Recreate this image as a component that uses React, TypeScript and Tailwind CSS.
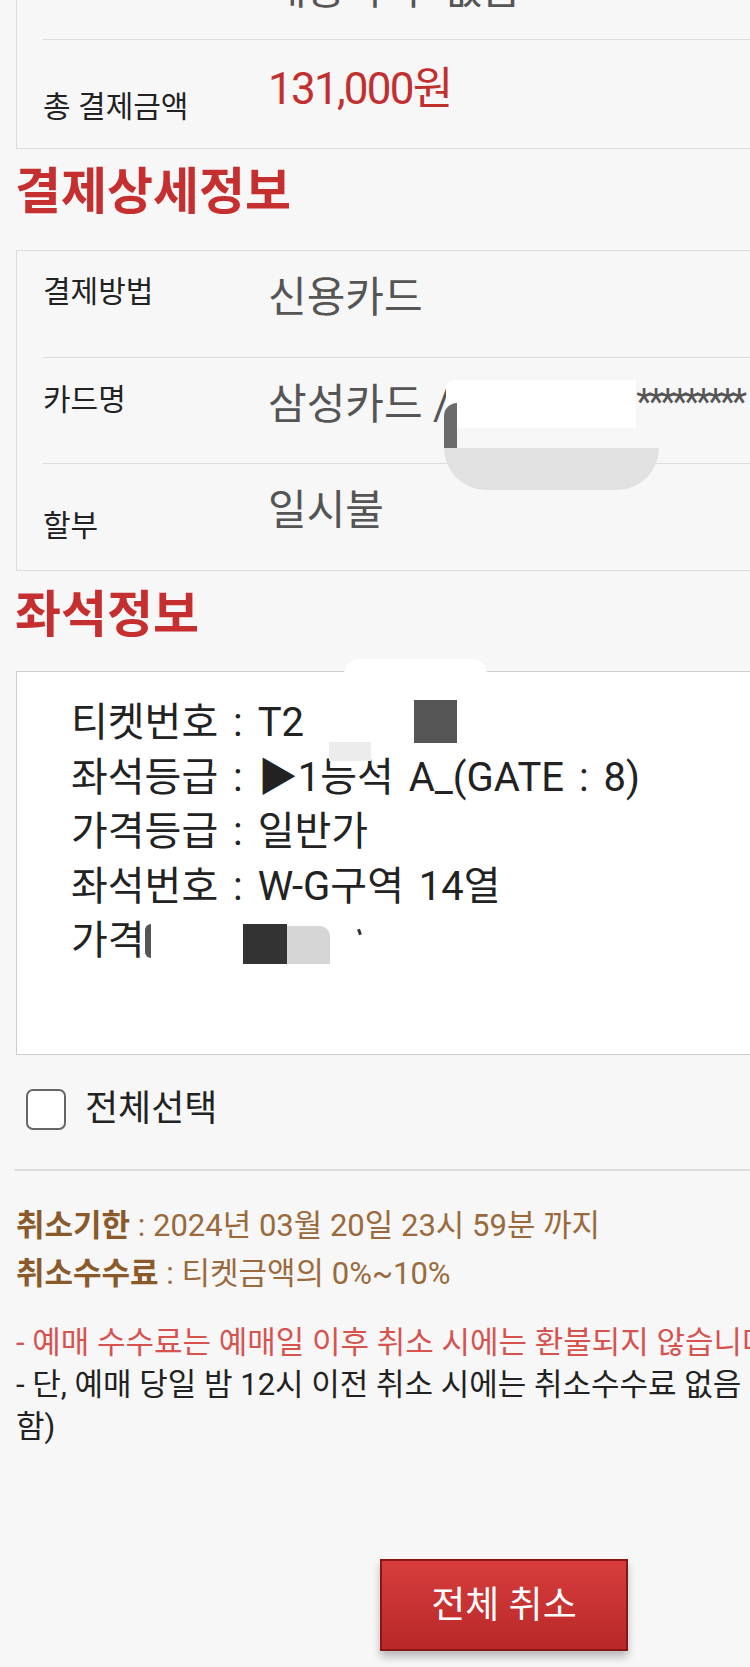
import React from "react";

const font = "font-['Roboto','Noto_Sans_CJK_KR',sans-serif]";

type Row = { label: string; value: React.ReactNode; labelPad: string };

function InfoRow({ label, value, labelPad, first, h }: Row & { first?: boolean; h: string }) {
  return (
    <div className={`ml-[26px] flex ${h} ${first ? "" : "border-t border-[#dcdcdc]"}`}>
      <div className={`w-[225px] shrink-0 text-[30px] leading-none text-[#222] ${labelPad}`}>{label}</div>
      <div className="relative pt-[26px] text-[42px] leading-none text-[#555] whitespace-nowrap">{value}</div>
    </div>
  );
}

export default function App() {
  return (
    <div className={`relative h-[1667px] w-[750px] overflow-hidden bg-[#f7f7f7] ${font}`}>
      {/* 상단 결제 요약 박스 (위쪽 잘림) */}
      <div className="ml-[16px] mt-[-70px] w-[900px] border border-[#dcdcdc]">
        <div className="ml-[26px] flex h-[108px]">
          <div className="w-[225px] shrink-0" />
          <div className="pt-[38px] text-[42px] leading-none text-[#555] whitespace-nowrap">배송 수수 없음</div>
        </div>
        <div className="ml-[26px] flex h-[109px] border-t border-[#dcdcdc]">
          <div className="w-[225px] shrink-0 pt-[52px] text-[30px] leading-none text-[#222]">총 결제금액</div>
          <div className="pt-[27px] text-[44px] leading-none tracking-[-0.04em] text-[#c1302f]">131,000원</div>
        </div>
      </div>

      <h2 className="h-[101px] pt-[18px] pl-[15px] text-[50px] font-bold leading-none text-[#c62f2f]">결제상세정보</h2>

      <div className="ml-[16px] w-[900px] border border-[#dcdcdc]">
        <InfoRow first h="h-[106px]" label="결제방법" labelPad="pt-[26px]" value="신용카드" />
        <InfoRow
          h="h-[106px]"
          label="카드명"
          labelPad="pt-[27px]"
          value={
            <>
              삼성카드 /<span className="ml-[186px] align-top text-[36px] tracking-[-0.1em]">*********</span>
              {/* 가림 처리 */}
              <div className="absolute left-[178px] top-[22px] h-[48px] w-[190px] rounded-tl-[8px] bg-white" />
              <div className="absolute left-[176px] top-[45px] h-[45px] w-[13px] rounded-tl-[14px] bg-[#6b6b6b]" />
              <div className="absolute left-[176px] top-[90px] h-[42px] w-[215px] rounded-b-[60px] bg-[#e1e1e1]" />
            </>
          }
        />
        <InfoRow h="h-[107px]" label="할부" labelPad="pt-[47px]" value="일시불" />
      </div>

      <h2 className="h-[100px] pt-[19px] pl-[15px] text-[50px] font-bold leading-none text-[#c62f2f]">좌석정보</h2>

      <div className="relative ml-[16px] h-[384px] w-[900px] border border-[#cfcfcf] bg-white">
        <div className="absolute left-[327px] top-[-13px] h-[15px] w-[143px] rounded-t-[40px] bg-white" />
        <div className="pl-[54px] pt-[24px] text-[40px] leading-[54.5px] text-[#222] [word-spacing:5px]">
          <div className="relative">
            티켓번호 : T2
            <div className="absolute left-[343px] top-[4px] h-[43px] w-[43px] bg-[#555]" />
            <div className="absolute left-[258px] top-[46px] h-[19px] w-[42px] bg-[#ececec]" />
          </div>
          <div>좌석등급 : ▶1능석 A_(GATE : 8)</div>
          <div>가격등급 : 일반가</div>
          <div>좌석번호 : W-G구역 14열</div>
          <div className="relative">
            가격
            <span className="inline-block h-[34px] w-[6px] translate-y-[4px] rounded-l-full bg-[#555]" />
            <div className="absolute left-[172px] top-[10px] h-[40px] w-[44px] bg-[#333]" />
            <div className="absolute left-[216px] top-[12px] h-[38px] w-[43px] rounded-tr-[10px] bg-[#d6d6d6]" />
            <div className="absolute left-[287px] top-[15px] h-[6px] w-[3px] rotate-[-20deg] bg-[#333]" />
          </div>
        </div>
      </div>

      <label className="flex h-[114px] items-center gap-[19px] pl-[26px] pb-[6px]">
        <span className="h-[41px] w-[40px] rounded-[7px] border-2 border-[#666] bg-white" />
        <span className="text-[36px] leading-none text-[#222]">전체선택</span>
      </label>

      <div className="ml-[14px] w-[900px] border-t-2 border-[#dddddd]" />

      <div className="pl-[16px] pt-[31px] text-[31px] leading-[48px] text-[#9a6a3c] whitespace-nowrap">
        <div>
          <span className="font-bold text-[#8b5a2b]">취소기한</span> : 2024년 03월 20일 23시 59분 까지
        </div>
        <div>
          <span className="font-bold text-[#8b5a2b]">취소수수료</span> : 티켓금액의 0%~10%
        </div>
      </div>

      <div className="pl-[16px] pt-[24px] text-[31px] leading-[42px] whitespace-nowrap">
        <div className="text-[#d65350]">- 예매 수수료는 예매일 이후 취소 시에는 환불되지 않습니다.</div>
        <div className="text-[#222]">- 단, 예매 당일 밤 12시 이전 취소 시에는 취소수수료 없음 (예매수수료 환불</div>
        <div className="text-[#222]">함)</div>
      </div>

      <div className="flex pl-[380px] pt-[111px]">
        <button className="h-[92px] w-[248px] border-2 border-[#8a1515] bg-gradient-to-b from-[#d83d3d] to-[#b82828] text-[37px] leading-none text-white shadow-[0_6px_8px_rgba(0,0,0,0.25)]">
          전체 취소
        </button>
      </div>
    </div>
  );
}
